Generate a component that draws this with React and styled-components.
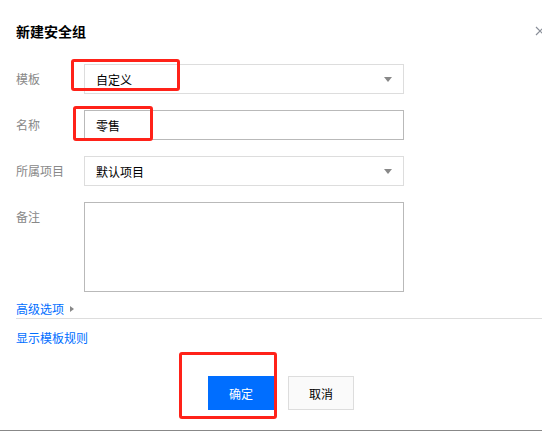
import React from "react";
import styled, { createGlobalStyle } from "styled-components";

const Global = createGlobalStyle`
  html, body { margin: 0; padding: 0; background: #fff; overflow: hidden; }
  body { font-family: "Noto Sans CJK SC", "Noto Sans", sans-serif; }
  * { box-sizing: border-box; }
`;

const Page = styled.div`
  position: relative;
  width: 542px;
  height: 431px;
  overflow: hidden;
`;

const Dialog = styled.div`
  width: 562px;
  height: 431px;
  padding: 20px 16px 0 16px;
  border-bottom: 1px solid #888;
  display: flex;
  flex-direction: column;
`;

const Header = styled.div`
  display: flex;
  align-items: center;
  justify-content: space-between;
  height: 22px;
`;

const Title = styled.h3`
  margin: 0;
  font-size: 14px;
  font-weight: 700;
  color: #000;
  line-height: 22px;
`;

const Close = styled.button`
  border: 0;
  background: none;
  padding: 0;
  margin-right: 1px;
  width: 10px;
  height: 10px;
  display: flex;
  color: #888;
`;

const Form = styled.div`
  margin-top: 22px;
  display: flex;
  flex-direction: column;
  gap: 16px;
`;

const Row = styled.div`
  display: flex;
  align-items: flex-start;
`;

const Label = styled.div`
  width: 68px;
  font-size: 12px;
  line-height: 30px;
  color: #888;
`;

const Field = styled.div`
  position: relative;
  width: 320px;
  height: ${(p) => p.$h || 30}px;
  border: 1px solid ${(p) => (p.$dark ? "#b9b9b9" : "#ddd")};
  background: #fff;
  padding: 0 11px;
  display: flex;
  align-items: center;
  justify-content: space-between;
  font-size: 12px;
  color: #000;
`;

const Caret = styled.span`
  width: 0;
  height: 0;
  border-left: 4px solid transparent;
  border-right: 4px solid transparent;
  border-top: 5px solid #888;
`;

const Advanced = styled.div`
  margin-top: 6px;
  height: 20px;
  display: flex;
  align-items: center;
  gap: 6px;
  font-size: 12px;
  color: #006eff;
  border-bottom: 1px solid #ddd;
  padding-bottom: 0;
  box-sizing: content-box;
`;

const RightTri = styled.span`
  width: 0;
  height: 0;
  border-top: 3px solid transparent;
  border-bottom: 3px solid transparent;
  border-left: 4px solid #888;
  margin-top: 1px;
`;

const Link = styled.div`
  margin-top: 9px;
  font-size: 12px;
  line-height: 20px;
  color: #006eff;
`;

const Footer = styled.div`
  margin-top: 28px;
  display: flex;
  justify-content: center;
  gap: 14px;
`;

const Button = styled.button`
  width: 66px;
  height: 34px;
  font-family: inherit;
  font-size: 12px;
  border: 1px solid ${(p) => (p.$primary ? "#006eff" : "#ddd")};
  background: ${(p) => (p.$primary ? "#006eff" : "#fafafa")};
  color: ${(p) => (p.$primary ? "#fff" : "#000")};
  padding: 0;
`;

const Mark = styled.div`
  position: absolute;
  border: 3px solid #ff2219;
  border-radius: 3px;
  pointer-events: none;
`;

export default function App() {
  return (
    <Page>
      <Global />
      <Dialog>
        <Header>
          <Title>新建安全组</Title>
          <Close aria-label="关闭">
            <svg width="10" height="10" viewBox="0 0 10 10">
              <path d="M1 1L9 9M9 1L1 9" stroke="#8a8f99" strokeWidth="1.2" fill="none" />
            </svg>
          </Close>
        </Header>
        <Form>
          <Row>
            <Label>模板</Label>
            <Field>
              <span>自定义</span>
              <Caret />
            </Field>
          </Row>
          <Row>
            <Label>名称</Label>
            <Field $dark>
              <span>零售</span>
            </Field>
          </Row>
          <Row>
            <Label>所属项目</Label>
            <Field>
              <span>默认项目</span>
              <Caret />
            </Field>
          </Row>
          <Row>
            <Label>备注</Label>
            <Field $dark $h={90} />
          </Row>
        </Form>
        <Advanced>
          <span>高级选项</span>
          <RightTri />
        </Advanced>
        <Link>显示模板规则</Link>
        <Footer>
          <Button $primary>确定</Button>
          <Button>取消</Button>
        </Footer>
      </Dialog>
      <Mark style={{ left: 71, top: 59, width: 109, height: 32 }} />
      <Mark style={{ left: 73, top: 106, width: 80, height: 35 }} />
      <Mark style={{ left: 179, top: 352, width: 98, height: 67 }} />
    </Page>
  );
}
